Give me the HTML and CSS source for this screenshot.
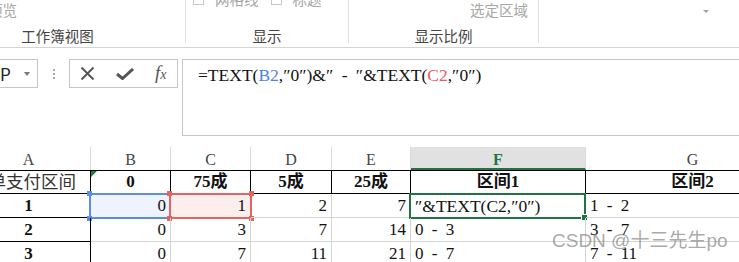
FILE: index.html
```html
<!DOCTYPE html>
<html lang="zh-CN">
<head>
    <meta charset="UTF-8">
    <title>工作表 - 区间公式</title>
    <link rel="stylesheet" href="styles.css">
</head>
<body>
    <div class="ribbon">
        <div class="group g-view">
            <div class="group-body"><span class="muted">分页预览</span></div>
            <div class="group-label">工作簿视图</div>
        </div>
        <div class="group g-show">
            <div class="group-body">
                <div class="checks">
                    <span class="check-box"></span><span class="muted">网格线</span>
                    <span class="check-box"></span><span class="muted">标题</span>
                </div>
            </div>
            <div class="group-label">显示</div>
        </div>
        <div class="group g-zoom">
            <div class="group-body right"><span class="muted">选定区域</span></div>
            <div class="group-label">显示比例</div>
        </div>
        <div class="group g-rest">
            <span class="ribbon-arrow"></span>
        </div>
    </div>

    <div class="fbar">
        <div class="namebox"><span>P</span><span class="name-arrow"></span></div>
        <div class="dots"><i></i><i></i><i></i></div>
        <div class="fx-tools">
            <svg width="15" height="13" viewBox="0 0 15 13"><path d="M1.5 0.5 L13.5 12.5 M13.5 0.5 L1.5 12.5" stroke="#555" stroke-width="2" fill="none"/></svg>
            <svg width="18" height="12" viewBox="0 0 18 12"><path d="M1 6 L6.5 10.5 L17 1" stroke="#555" stroke-width="3" fill="none"/></svg>
            <span class="fx">f<sub>x</sub></span>
        </div>
        <div class="formula">=TEXT(<span class="ref-b">B2</span>,″0″)&amp;″ - ″&amp;TEXT(<span class="ref-c">C2</span>,″0″)</div>
    </div>

    <div class="sheet">
        <div class="col-head">A</div>
        <div class="col-head">B</div>
        <div class="col-head">C</div>
        <div class="col-head">D</div>
        <div class="col-head">E</div>
        <div class="col-head active">F</div>
        <div class="col-head">G</div>

        <div class="cell title a first">订单支付区间</div>
        <div class="cell title flag">0</div>
        <div class="cell title">75成</div>
        <div class="cell title">5成</div>
        <div class="cell title">25成</div>
        <div class="cell title">区间1</div>
        <div class="cell title">区间2</div>

        <div class="cell a">1</div>
        <div class="cell num sel-b">0<span class="sel-box blue"><i class="h tl"></i><i class="h bl"></i></span></div>
        <div class="cell num sel-c">1<span class="sel-box red"><i class="h tl"></i><i class="h tr"></i><i class="h bl"></i><i class="h br"></i></span></div>
        <div class="cell num">2</div>
        <div class="cell num">7</div>
        <div class="cell text editing">″&amp;TEXT(C2,″0″)<span class="cursor-box"><i class="fill-handle"></i></span></div>
        <div class="cell text">1 - 2</div>

        <div class="cell a">2</div>
        <div class="cell num">0</div>
        <div class="cell num">3</div>
        <div class="cell num">7</div>
        <div class="cell num">14</div>
        <div class="cell text">0 - 3</div>
        <div class="cell text">3 - 7</div>

        <div class="cell a">3</div>
        <div class="cell num">0</div>
        <div class="cell num">7</div>
        <div class="cell num">11</div>
        <div class="cell num">21</div>
        <div class="cell text">0 - 7</div>
        <div class="cell text">7 - 11</div>
    </div>

    <div class="watermark">CSDN @十三先生po</div>
</body>
</html>
```

FILE: styles.css
```css
body {
    margin: 0;
    width: 739px;
    height: 262px;
    overflow: hidden;
    position: relative;
    background-color: #fff;
    font-family: "Noto Sans CJK SC", sans-serif;
}

/* ribbon */
.ribbon {
    display: flex;
    height: 48px;
    box-sizing: border-box;
    border-bottom: 1px solid #d4d4d4;
}

.group {
    height: 43px;
    box-sizing: border-box;
    border-right: 1px solid #e1e1e1;
    display: flex;
    flex-direction: column;
    flex-shrink: 0;
}

.group-body {
    height: 29px;
    font-size: 14.5px;
    line-height: 20px;
    box-sizing: border-box;
}

.group-label {
    text-align: center;
    font-size: 14.5px;
    line-height: 14px;
    color: #444;
}

.muted {
    color: #a6a6a6;
}

.g-view {
    margin-left: -70px;
    width: 256px;
}

.g-view .group-body {
    padding-left: 29px;
}

.g-show {
    width: 163px;
}

.checks {
    display: flex;
    align-items: center;
    margin-top: -11px;
    padding-left: 7px;
    height: 20px;
}

.check-box {
    width: 11px;
    height: 11px;
    box-sizing: border-box;
    border: 1px solid #c8c8c8;
    margin-right: 11px;
}

.checks .muted {
    margin-right: 12px;
}

.g-zoom {
    width: 190px;
}

.g-zoom .group-body {
    text-align: right;
    padding-right: 10px;
}

.g-rest {
    flex: 1;
    border-right: none;
    padding: 10px 0 0 164px;
}

.ribbon-arrow {
    display: block;
    width: 0;
    height: 0;
    border-left: 3px solid transparent;
    border-right: 3px solid transparent;
    border-top: 3px solid #a0a0a0;
}

/* formula bar */
.fbar {
    display: flex;
    align-items: flex-start;
    height: 88px;
    box-sizing: border-box;
    padding-top: 11px;
}

.namebox {
    margin-left: -30px;
    width: 68px;
    height: 29px;
    box-sizing: border-box;
    border: 1px solid #c6c6c6;
    display: flex;
    align-items: center;
    justify-content: space-between;
    padding: 0 7px 0 29px;
    font-size: 17px;
    color: #222;
    flex-shrink: 0;
}

.name-arrow {
    width: 0;
    height: 0;
    border-left: 3px solid transparent;
    border-right: 3px solid transparent;
    border-top: 4px solid #777;
}

.dots {
    width: 31px;
    height: 29px;
    display: flex;
    flex-direction: column;
    align-items: center;
    justify-content: center;
    gap: 2px;
    flex-shrink: 0;
}

.dots i {
    width: 2px;
    height: 2px;
    background-color: #a8a8a8;
}

.fx-tools {
    width: 109px;
    height: 29px;
    box-sizing: border-box;
    border: 1px solid #c6c6c6;
    display: flex;
    align-items: center;
    justify-content: space-around;
    flex-shrink: 0;
}

.fx {
    font-family: "Liberation Serif", serif;
    font-style: italic;
    font-size: 19px;
    color: #555;
    line-height: 20px;
}

.fx sub {
    font-size: 14px;
    vertical-align: 0;
}

.formula {
    flex: 1;
    margin-left: 4px;
    margin-right: -10px;
    height: 77px;
    box-sizing: border-box;
    border: 1px solid #c6c6c6;
    padding: 4px 0 0 15px;
    font-family: "Liberation Serif", "Noto Sans CJK SC", serif;
    font-size: 17.5px;
    line-height: 22px;
    word-spacing: 4px;
    color: #111;
}

.ref-b {
    color: #4f82e6;
}

.ref-c {
    color: #e65c5c;
}

/* sheet */
.sheet {
    margin-top: 11px;
    margin-left: -33px;
    display: grid;
    grid-template-columns: 124px 80px 80px 81px 79px 175px 214px;
    grid-template-rows: 23px 24px 24px 24px 24px;
}

.col-head {
    border-right: 1px solid #dadada;
    text-align: center;
    font-family: "Liberation Serif", serif;
    font-size: 16px;
    line-height: 25px;
    color: #444;
}

.col-head.active {
    background-color: #e1e1e1;
    color: #217346;
    font-weight: bold;
    border-bottom: 2px solid #217346;
}

.cell {
    position: relative;
    box-sizing: border-box;
    border-right: 1px solid #d4d4d4;
    border-bottom: 1px solid #d4d4d4;
    font-family: "Liberation Serif", "Noto Sans CJK SC", serif;
    font-size: 17px;
    line-height: 24px;
    padding: 0 4px;
    white-space: nowrap;
    color: #111;
}

.title {
    border-top: 1px solid #000;
    border-right-color: #000;
    border-bottom-color: #000;
    font-weight: bold;
    text-align: center;
    line-height: 22px;
}

.a {
    border-right-color: #000;
    border-bottom-color: #000;
    font-weight: bold;
    text-align: center;
}

.title.a.first {
    font-weight: normal;
    color: #333;
    padding-right: 14px;
    font-size: 17.5px;
}

.flag::before {
    content: "";
    position: absolute;
    left: 0;
    top: 0;
    border-top: 6px solid #1e7a3c;
    border-right: 6px solid transparent;
}

.num {
    text-align: right;
}

.text {
    word-spacing: 4px;
}

.sel-b {
    background-color: #eef3fd;
}

.sel-c {
    background-color: #fdeeee;
}

.sel-box {
    position: absolute;
    left: -2px;
    top: -1px;
    right: -2px;
    bottom: -2px;
    border: 2px solid;
}

.sel-box.blue {
    border-color: #5b8ce8;
}

.sel-box.red {
    border-color: #e86262;
}

.h {
    position: absolute;
    width: 5px;
    height: 5px;
}

.blue .h {
    background-color: #5b8ce8;
}

.red .h {
    background-color: #e86262;
}

.h.tl { left: -4px; top: -4px; }
.h.tr { right: -4px; top: -4px; }
.h.bl { left: -4px; bottom: -4px; }
.h.br { right: -4px; bottom: -4px; }

.editing {
    font-size: 17.5px;
}

.cursor-box {
    position: absolute;
    left: -2px;
    top: -1px;
    right: -1px;
    bottom: -2px;
    border: 2px solid #217346;
}

.fill-handle {
    position: absolute;
    right: -4px;
    bottom: -4px;
    width: 5px;
    height: 5px;
    background-color: #217346;
    border: 1px solid #fff;
}

.watermark {
    position: absolute;
    left: 552px;
    top: 230px;
    font-family: "Liberation Sans", "Noto Sans CJK SC", sans-serif;
    font-size: 19px;
    line-height: 22px;
    color: rgba(120, 120, 120, 0.65);
    white-space: nowrap;
}
```
